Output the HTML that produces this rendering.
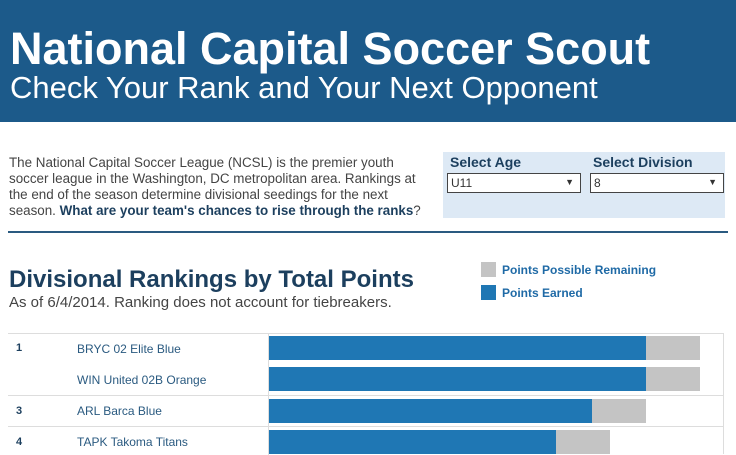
<!DOCTYPE html>
<html><head><style>
*{margin:0;padding:0;box-sizing:border-box}
body{width:736px;height:454px;overflow:hidden;background:#fff;font-family:"Liberation Sans",sans-serif;position:relative}
.hdr{position:absolute;left:0;top:0;width:736px;height:122px;background:#1c5a8a;color:#fff}
.t1{position:absolute;left:10px;top:23px;font-size:45px;font-weight:bold;white-space:nowrap}
.t2{position:absolute;left:10px;top:70px;font-size:31px;white-space:nowrap}
.intro{position:absolute;left:9px;top:155px;width:440px;font-size:13.4px;line-height:16px;color:#444;white-space:nowrap}
.intro b{color:#1c3f5e}
.ctl{position:absolute;left:443px;top:152px;width:282px;height:66px;background:#dde9f5}
.lab{position:absolute;top:2px;font-size:14px;font-weight:bold;color:#1c3f5e}
.sel{position:absolute;top:21px;height:20px;border:1px solid #444;background:#fff;font-size:12px;color:#333;padding:2px 3px}
.sel span{position:absolute;right:6px;top:3px;font-size:9px}
.div{position:absolute;left:8px;top:231px;width:720px;height:2px;background:#2a5a80}
.h2{position:absolute;left:9px;top:266px;font-size:24px;font-weight:bold;color:#1c3f5e;white-space:nowrap}
.sub{position:absolute;left:9px;top:294px;font-size:15px;color:#444;white-space:nowrap}
.leg{position:absolute;left:481px;font-size:12px;font-weight:bold;color:#1f6aa6}
.leg i{position:absolute;left:0;top:0;width:15px;height:15px}
.leg span{position:absolute;left:21px;top:1px;white-space:nowrap}
.tbl{position:absolute;left:8px;top:333px;width:716px;height:121px;border-top:1px solid #ddd;border-right:1px solid #ddd}
.vl{position:absolute;left:260px;top:0;width:1px;height:121px;background:#ddd}
.hl{position:absolute;left:0;width:716px;height:1px;background:#ddd}
.rk{position:absolute;left:8px;font-size:11px;font-weight:bold;color:#1c3f5e}
.nm{position:absolute;left:69px;font-size:12px;color:#2a5a80}
.bb{position:absolute;height:24px}
</style></head><body>
<div class="hdr"><div class="t1">National Capital Soccer Scout</div><div class="t2">Check Your Rank and Your Next Opponent</div></div>
<div class="intro">The National Capital Soccer League (NCSL) is the premier youth<br>soccer league in the Washington, DC metropolitan area. Rankings at<br>the end of the season determine divisional seedings for the next<br>season. <b>What are your team's chances to rise through the ranks</b>?</div>
<div class="ctl">
<div class="lab" style="left:7px">Select Age</div><div class="lab" style="left:150px">Select Division</div>
<div class="sel" style="left:4px;width:134px">U11<span>▼</span></div>
<div class="sel" style="left:147px;width:134px">8<span>▼</span></div>
</div>
<div class="div"></div>
<div class="h2">Divisional Rankings by Total Points</div>
<div class="sub">As of 6/4/2014. Ranking does not account for tiebreakers.</div>
<div class="leg" style="top:262px"><i style="background:#c4c4c4"></i><span>Points Possible Remaining</span></div>
<div class="leg" style="top:285px"><i style="background:#1f77b4"></i><span>Points Earned</span></div>
<div class="tbl">
<div class="vl"></div>
<div class="hl" style="top:61px"></div><div class="hl" style="top:92px"></div>
<div class="rk" style="top:8px">1</div><div class="nm" style="top:8px">BRYC 02 Elite Blue</div>
<div class="nm" style="top:39px">WIN United 02B Orange</div>
<div class="rk" style="top:71px">3</div><div class="nm" style="top:70px">ARL Barca Blue</div>
<div class="rk" style="top:102px">4</div><div class="nm" style="top:101px">TAPK Takoma Titans</div>
<div class="bb" style="left:261px;top:2px;width:377px;background:#1f77b4"></div><div class="bb" style="left:638px;top:2px;width:54px;background:#c4c4c4"></div>
<div class="bb" style="left:261px;top:33px;width:377px;background:#1f77b4"></div><div class="bb" style="left:638px;top:33px;width:54px;background:#c4c4c4"></div>
<div class="bb" style="left:261px;top:65px;width:323px;background:#1f77b4"></div><div class="bb" style="left:584px;top:65px;width:54px;background:#c4c4c4"></div>
<div class="bb" style="left:261px;top:96px;width:287px;background:#1f77b4"></div><div class="bb" style="left:548px;top:96px;width:54px;background:#c4c4c4"></div>
</div>
</body></html>
